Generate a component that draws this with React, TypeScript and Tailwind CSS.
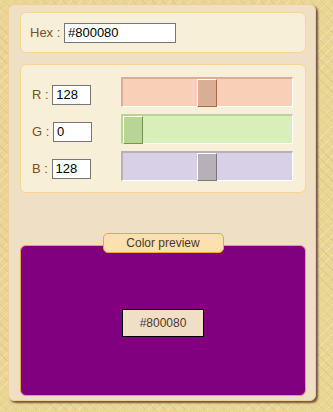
import { useState } from 'react';

type Channel = 'r' | 'g' | 'b';

const SLIDER_STYLE: Record<Channel, { track: string; thumb: string; label: string }> = {
  r: {
    label: 'R',
    track: 'bg-[#f8d0b8] border-t-[#d9ae96] border-l-[#d9ae96]',
    thumb: 'bg-[#d9ae96] border-b-[#a86c44] border-r-[#a86c44]',
  },
  g: {
    label: 'G',
    track: 'bg-[#d9efb9] border-t-[#b8d497] border-l-[#b8d497]',
    thumb: 'bg-[#b8d497] border-b-[#6f9a3e] border-r-[#6f9a3e]',
  },
  b: {
    label: 'B',
    track: 'bg-[#d8d0e6] border-t-[#b8b0b8] border-l-[#b8b0b8]',
    thumb: 'bg-[#b8b0b8] border-b-[#7a767a] border-r-[#7a767a]',
  },
};

function toHex(n: number) {
  return n.toString(16).padStart(2, '0');
}

function Slider({ channel, value }: { channel: Channel; value: number }) {
  const s = SLIDER_STYLE[channel];
  // inner track is 169px, thumb 20px wide
  const left = Math.round((value / 255) * 148);
  return (
    <div
      className={`relative h-[30px] w-[172px] border-t-2 border-l-2 border-b border-r border-b-white border-r-white ${s.track}`}
    >
      <div
        className={`absolute top-0 h-[28px] w-[20px] border border-t-white border-l-white ${s.thumb}`}
        style={{ left }}
      />
    </div>
  );
}

export default function App() {
  const [rgb] = useState({ r: 128, g: 0, b: 128 });
  const hex = `#${toHex(rgb.r)}${toHex(rgb.g)}${toHex(rgb.b)}`;

  return (
    <div
      className="min-h-screen w-full bg-[#e9d594] bg-[repeating-linear-gradient(45deg,transparent_0_6px,rgba(190,160,80,0.18)_6px_7px),repeating-linear-gradient(-45deg,transparent_0_6px,rgba(255,250,220,0.25)_6px_7px)] pt-[4px] pl-[8px] font-['Liberation_Sans',Arial,sans-serif] text-[13px]"
    >
      <div className="w-[308px] rounded-md border border-[#f8cc8e] bg-[#efdfc5] pl-[11px] pr-[8px] pt-[7px] pb-[4px] shadow-[2px_2px_2px_#6d5a3d]">
        {/* hex */}
        <div className="flex h-[41px] w-[286px] items-center rounded-md border border-[#fbd391] bg-[#f8efd9] pl-[9px]">
          <span className="text-[#7b5122]">Hex :&nbsp;</span>
          <input
            readOnly
            value={hex}
            className="h-[20px] w-[112px] border border-[#767676] bg-white px-[3px] text-[13px] text-black outline-none"
          />
        </div>

        {/* rgb */}
        <div className="mt-[11px] flex h-[129px] w-[286px] flex-col gap-[7px] rounded-md border border-[#fbd391] bg-[#f8efd9] pt-[12px] pl-[11px]">
          {(['r', 'g', 'b'] as Channel[]).map((c) => (
            <div key={c} className="flex h-[30px] items-center">
              <div className="flex w-[89px] items-center pt-[5px]">
                <span className="text-[#7b5122]">{SLIDER_STYLE[c].label} :&nbsp;</span>
                <input
                  readOnly
                  value={rgb[c]}
                  className="h-[20px] w-[39px] border border-[#767676] bg-white px-[3px] text-[13px] text-black outline-none"
                />
              </div>
              <Slider channel={c} value={rgb[c]} />
            </div>
          ))}
        </div>

        {/* preview */}
        <div className="mt-[40px] w-[286px]">
          <div className="relative z-10 mx-auto flex h-[20px] w-[121px] items-center justify-center rounded-[5px] border border-[#f5a623] bg-[#fde0ae] text-[12px] text-[#4a3a2a]">
            Color preview
          </div>
          <div
            className="-mt-[8px] flex h-[151px] items-center justify-center rounded-md border border-[#e7a25c] pt-[4px]"
            style={{ backgroundColor: hex }}
          >
            <div className="flex h-[28px] w-[82px] items-center justify-center border border-black bg-[#f0dfc6] text-[12px] text-[#4a3a2a]">
              {hex}
            </div>
          </div>
        </div>
      </div>
    </div>
  );
}
